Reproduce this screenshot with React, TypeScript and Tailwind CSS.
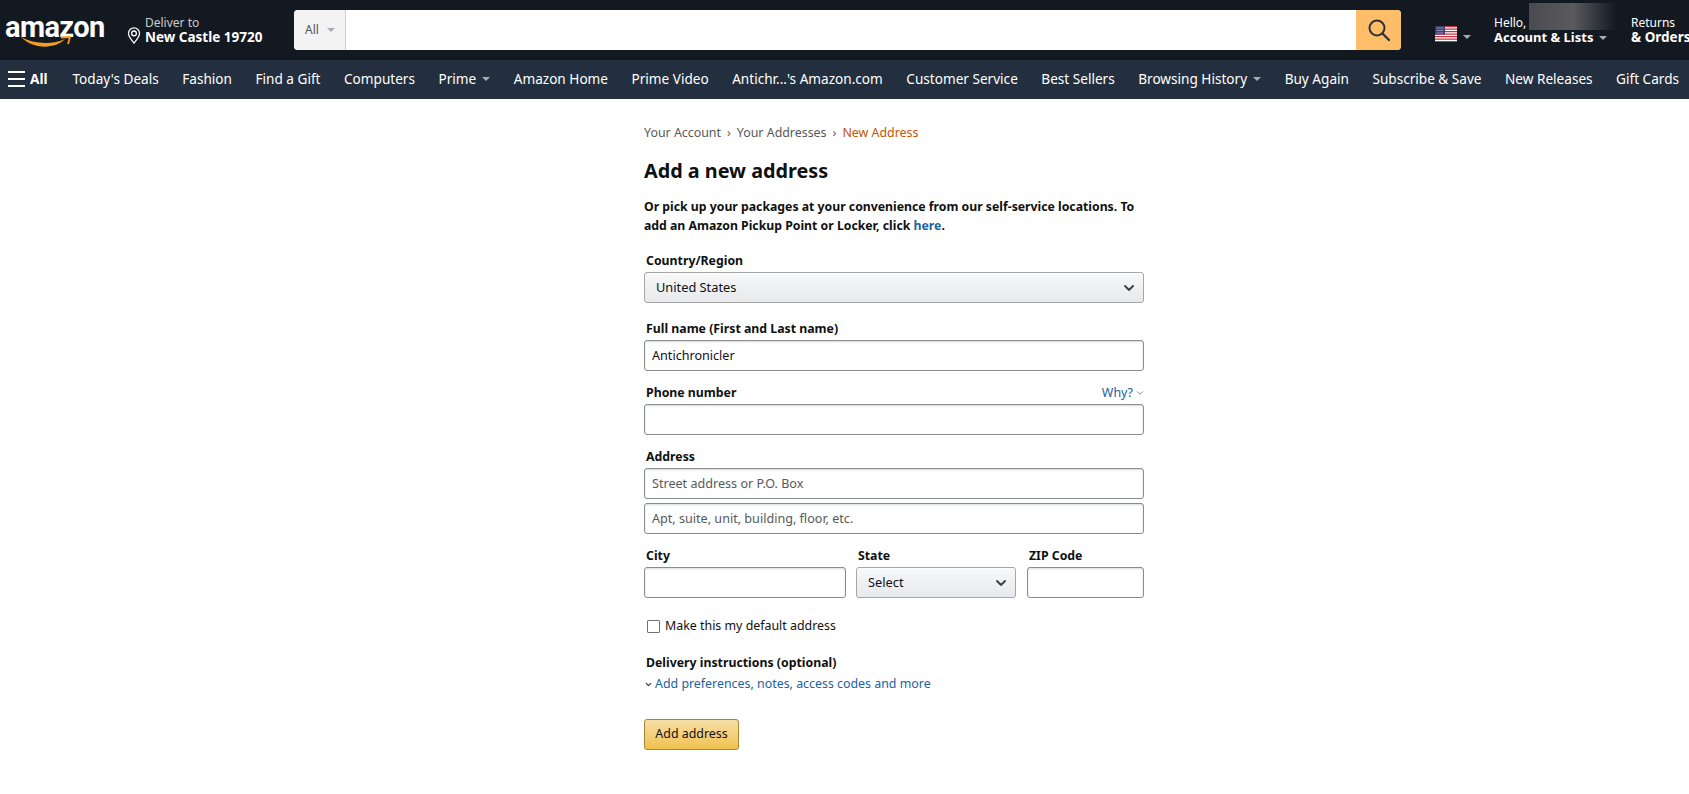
import { ChevronDown } from "lucide-react";
import type { ReactNode } from "react";

const navItems = [
  { label: "Today's Deals" },
  { label: "Fashion" },
  { label: "Find a Gift" },
  { label: "Computers" },
  { label: "Prime", caret: true },
  { label: "Amazon Home" },
  { label: "Prime Video" },
  { label: "Antichr...'s Amazon.com" },
  { label: "Customer Service" },
  { label: "Best Sellers" },
  { label: "Browsing History", caret: true },
  { label: "Buy Again" },
  { label: "Subscribe & Save" },
  { label: "New Releases" },
  { label: "Gift Cards" },
];

function Caret({ className = "" }: { className?: string }) {
  return (
    <span
      className={`inline-block h-0 w-0 border-x-[4px] border-t-[4px] border-x-transparent border-t-[#a7acb2] ${className}`}
    />
  );
}

function Flag() {
  return (
    <svg width="22" height="16" viewBox="0 0 22 16" className="shrink-0">
      <rect width="22" height="16" fill="#fff" />
      {[0, 2.5, 5, 7.5, 10, 12.5, 15].map((y) => (
        <rect key={y} y={y} width="22" height="1.25" fill="#c8313e" />
      ))}
      <rect width="10" height="8.5" fill="#3c3b6e" />
      <rect x="1.5" y="1.5" width="7" height="1" fill="#8f90b8" />
      <rect x="1.5" y="4" width="7" height="1" fill="#8f90b8" />
      <rect x="1.5" y="6.5" width="7" height="1" fill="#8f90b8" />
    </svg>
  );
}

function Header() {
  return (
    <header className="flex h-[60px] items-center overflow-hidden bg-[#131921] text-white">
      <div className="relative ml-[5px] h-[50px] w-[92px] shrink-0">
        <span className="absolute left-0 top-[4px] font-['Roboto',sans-serif] text-[29px] font-bold leading-[36px] tracking-[-0.6px] text-white">
          amazon
        </span>
        <svg
          width="52"
          height="13"
          viewBox="0 0 52 13"
          className="absolute left-[15px] top-[31px]"
        >
          <path d="M1 1 C 13 8, 33 9, 45 3 C 36 13, 13 14, 1 1 Z" fill="#f59b1e" />
          <path
            d="M41 1.5 L50 1 L48 8"
            fill="none"
            stroke="#f59b1e"
            strokeWidth="1.8"
            strokeLinejoin="round"
          />
        </svg>
      </div>
      <div className="ml-[30px] flex w-[167px] shrink-0 items-end">
        <svg width="14" height="17" viewBox="0 0 16 20" className="mb-[1px] mr-[4px] shrink-0">
          <path
            d="M8 19 C 4 14, 1.5 11, 1.5 7.5 A 6.5 6.5 0 0 1 14.5 7.5 C 14.5 11, 12 14, 8 19 Z"
            fill="none"
            stroke="#fff"
            strokeWidth="1.5"
          />
          <circle cx="8" cy="7.5" r="2.8" fill="none" stroke="#fff" strokeWidth="1.5" />
        </svg>
        <div>
          <div className="text-[12px] font-normal leading-[14px] text-[#ccc]">Deliver to</div>
          <div className="-mt-px whitespace-nowrap text-[13.5px] font-bold leading-[16px]">New Castle 19720</div>
        </div>
      </div>
      <div className="flex h-10 w-[1107px] shrink-0 overflow-hidden rounded-[4px] bg-white">
        <div className="flex w-[52px] items-center border-r border-[#cdcdcd] bg-[#f3f3f3] pl-[11px] text-xs text-[#555]">
          All
          <Caret className="ml-[8px] border-t-[#777]" />
        </div>
        <input className="min-w-0 flex-1 outline-none" aria-label="Search" />
        <div className="flex w-[45px] items-center justify-center bg-[#febd69]">
          <svg width="24" height="24" viewBox="0 0 24 24" fill="none" stroke="#333" strokeWidth="2">
            <circle cx="10" cy="10" r="7.5" />
            <path d="M15.5 15.5 L22 22" strokeLinecap="round" strokeWidth="2.4" />
          </svg>
        </div>
      </div>
      <div className="ml-[34px] flex w-[59px] shrink-0 items-center pt-[8px]">
        <Flag />
        <Caret className="ml-[6px] mt-[6px]" />
      </div>
      <div className="relative w-[137px] shrink-0">
        <div className="text-xs leading-[14px]">Hello,</div>
        <span className="absolute left-[35px] top-[-13px] h-[27px] w-[88px] bg-gradient-to-r from-[#4a4b50] via-[#5a5b5f] to-[#131921]" />
        <div className="-mt-px flex items-center whitespace-nowrap text-[13px] font-bold leading-[16px]">
          Account &amp; Lists
          <Caret className="ml-[6px] mt-[2px]" />
        </div>
      </div>
      <div className="shrink-0">
        <div className="text-xs leading-[14px]">Returns</div>
        <div className="-mt-px whitespace-nowrap text-[13.5px] font-bold leading-[16px]">&amp; Orders</div>
      </div>
    </header>
  );
}

function NavBar() {
  return (
    <nav className="flex h-[39px] items-center overflow-hidden bg-[#232f3e] text-[13.6px] text-white">
      <div className="ml-[8px] mr-[25px] flex shrink-0 items-center font-bold">
        <span className="mr-[5px] flex w-[17px] flex-col gap-[5px]">
          <span className="h-[2px] bg-white" />
          <span className="h-[2px] bg-white" />
          <span className="h-[2px] bg-white" />
        </span>
        All
      </div>
      <div className="flex gap-[23.5px] whitespace-nowrap">
        {navItems.map((item) => (
          <span key={item.label} className="flex items-center">
            {item.label}
            {item.caret ? <Caret className="ml-[6px]" /> : null}
          </span>
        ))}
      </div>
    </nav>
  );
}

function Label({ children }: { children: ReactNode }) {
  return <div className="h-[20px] pl-[2px] text-[12.3px] font-bold leading-[20px] text-[#0f1111]">{children}</div>;
}

function TextBox({ value, placeholder }: { value?: string; placeholder?: string }) {
  return (
    <input
      readOnly
      value={value ?? ""}
      placeholder={placeholder}
      className="mt-px block h-[31px] w-full rounded-[3px] border border-[#888c8c] bg-white px-[7px] text-[12.6px] text-[#0f1111] shadow-[inset_0_1px_2px_rgba(15,17,17,0.15)] outline-none placeholder:text-[#565959]"
    />
  );
}

function SelectBox({ text }: { text: string }) {
  return (
    <div className="mt-px flex h-[31px] items-center justify-between rounded-[3px] border border-[#a6a6a6] bg-gradient-to-b from-[#f7f8fa] to-[#e7e9ec] pl-[11px] pr-[6px] text-[12.8px] text-[#0f1111] shadow-[0_1px_0_rgba(255,255,255,0.6)_inset]">
      {text}
      <ChevronDown size={16} strokeWidth={3} className="text-[#444]" />
    </div>
  );
}

function AddressForm() {
  return (
    <main className="ml-[644px] w-[500px] pb-[44px] pt-[24px] text-[12.4px] text-[#0f1111]">
      <div className="flex h-[20px] items-center leading-[20px] text-[#565959]">
        Your Account
        <span className="mx-[6px]">›</span>
        Your Addresses
        <span className="mx-[6px]">›</span>
        <span className="text-[#c45500]">New Address</span>
      </div>
      <h1 className="mt-[13px] text-[19.8px] font-bold leading-[30px]">Add a new address</h1>
      <p className="mt-[11px] text-[12.25px] font-bold leading-[19px]">
        Or pick up your packages at your convenience from our self-service locations. To add an Amazon Pickup Point or
        Locker, click <span className="text-[#2162a1]">here</span>.
      </p>

      <div className="mt-[16px]">
        <Label>Country/Region</Label>
        <SelectBox text="United States" />
      </div>
      <div className="mt-[16px]">
        <Label>Full name (First and Last name)</Label>
        <TextBox value="Antichronicler" />
      </div>
      <div className="mt-[12px]">
        <div className="flex items-center justify-between">
          <Label>Phone number</Label>
          <span className="flex items-center text-[#2162a1]">
            Why?
            <ChevronDown size={10} className="-mr-px ml-[2px] text-[#777]" />
          </span>
        </div>
        <TextBox />
      </div>
      <div className="mt-[12px]">
        <Label>Address</Label>
        <TextBox placeholder="Street address or P.O. Box" />
        <div className="mt-[4px]">
          <TextBox placeholder="Apt, suite, unit, building, floor, etc." />
        </div>
      </div>
      <div className="mt-[12px] flex gap-[10px]">
        <div className="w-[202px]">
          <Label>City</Label>
          <TextBox />
        </div>
        <div className="w-[160px]">
          <Label>State</Label>
          <SelectBox text="Select" />
        </div>
        <div className="ml-px flex-1">
          <Label>ZIP Code</Label>
          <TextBox />
        </div>
      </div>
      <label className="mt-[20px] flex h-[16px] items-center pl-[3px]">
        <span className="mr-[5px] h-[13px] w-[13px] rounded-[1px] border border-[#6f7373] bg-white" />
        Make this my default address
      </label>
      <div className="mt-[19px]">
        <Label>Delivery instructions (optional)</Label>
      </div>
      <div className="mt-[1px] flex h-[20px] items-center text-[#2162a1]">
        <ChevronDown size={9} strokeWidth={3} className="mr-[2px] text-[#333]" />
        Add preferences, notes, access codes and more
      </div>
      <button
        type="button"
        className="mt-[25px] flex h-[31px] w-[95px] items-center justify-center rounded-[3px] border border-[#a88734] bg-gradient-to-b from-[#f7dfa5] to-[#f0c14b] text-[#111]"
      >
        Add address
      </button>
    </main>
  );
}

export default function App() {
  return (
    <div className="min-h-screen overflow-hidden bg-white font-['Noto_Sans',sans-serif]">
      <Header />
      <NavBar />
      <AddressForm />
    </div>
  );
}
